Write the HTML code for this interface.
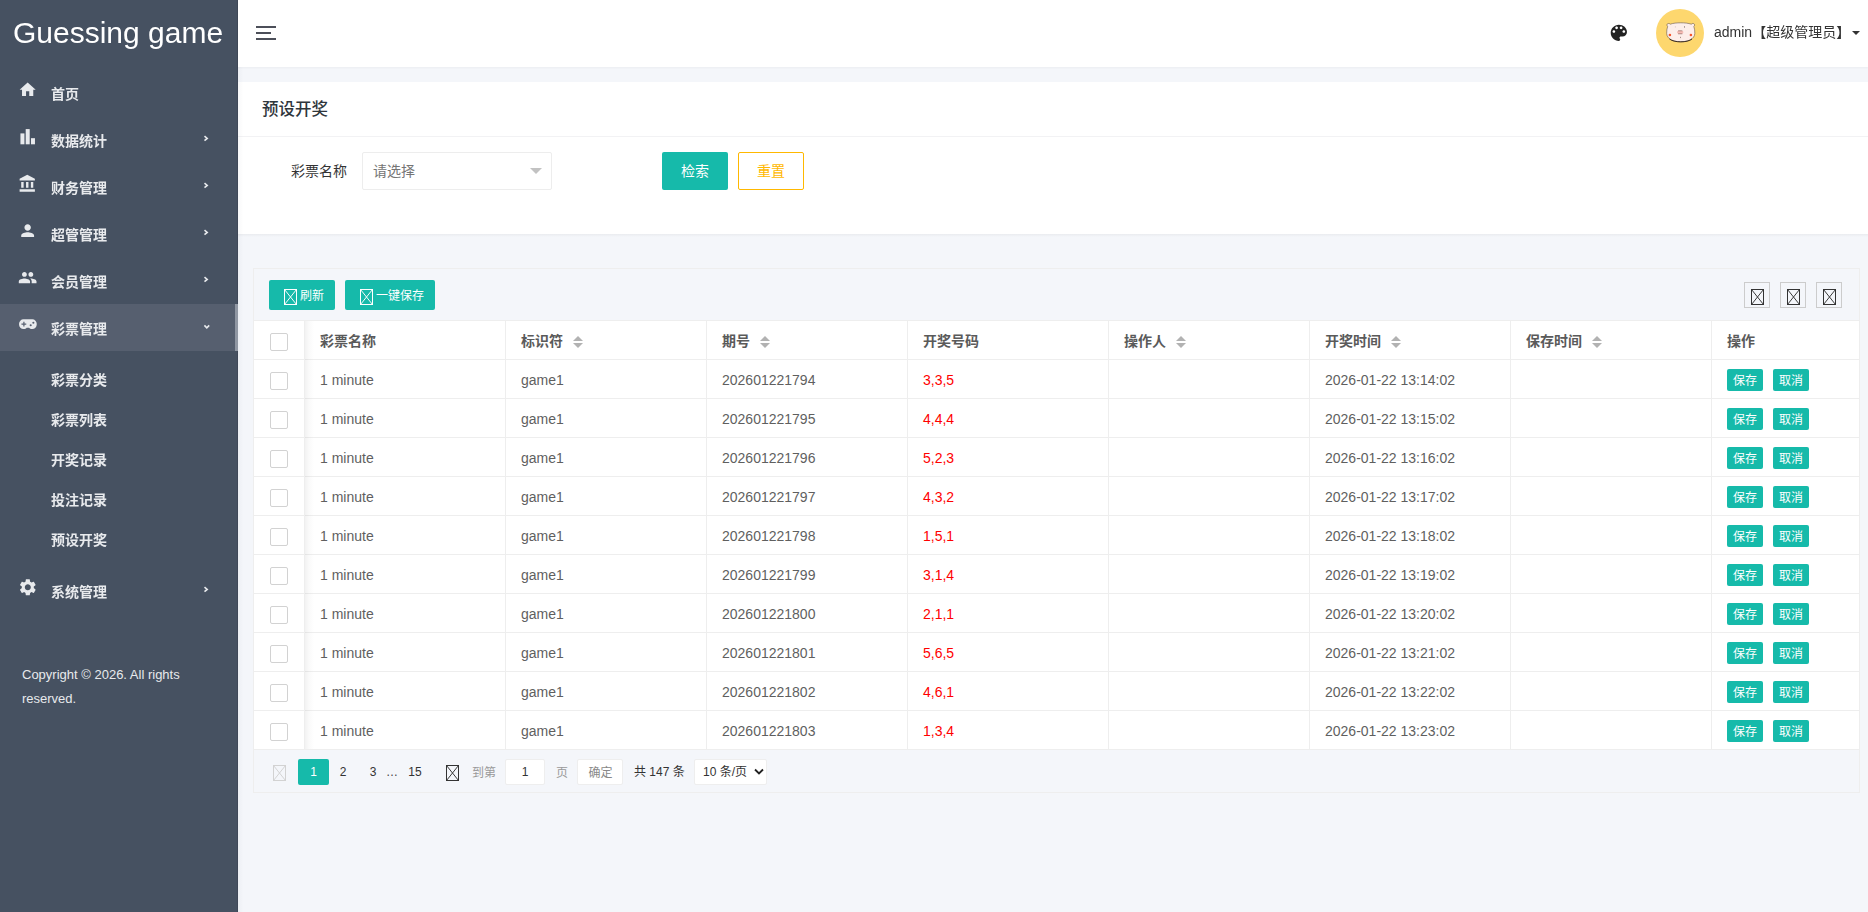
<!DOCTYPE html>
<html lang="zh-CN">
<head>
<meta charset="utf-8">
<title>Guessing game</title>
<style>
*{box-sizing:border-box;margin:0;padding:0}
html,body{width:1868px;height:912px;overflow:hidden}
body{background:#f4f6fa;font-family:"Liberation Sans","Noto Sans CJK SC",sans-serif;font-size:14px;color:#333;position:relative}
.abs{position:absolute}
svg{display:block;overflow:visible}
/* ---------- sidebar ---------- */
#side{position:absolute;left:0;top:0;width:238px;height:912px;background:#465161;color:#e8eaed;}
#logo{position:absolute;left:13px;top:15px;font-size:30px;line-height:36px;color:#fff;white-space:nowrap}
.mi{position:absolute;left:0;width:238px;height:47px}
.mi.on{background:#565f6f}
.mi .t{position:absolute;left:51px;top:15px;font-size:14px;line-height:20px;font-weight:700;white-space:nowrap}
.mi svg.ic{position:absolute;left:18.3px;top:10.6px;width:19.3px;height:19.3px;fill:#e8eaed}
.mi svg.ar{position:absolute;left:202px;top:18px;width:8px;height:9px;fill:none;stroke:#e8eaed;stroke-width:1.6}
.si{position:absolute;left:51px;font-size:14px;line-height:20px;font-weight:700;white-space:nowrap}
#thumb{position:absolute;left:235px;top:304px;width:3px;height:47px;background:#9097a3}
#edge{position:absolute;left:236.800px;top:0;width:1.200px;height:912px;background:#3f4858}
#sshadow{position:absolute;left:238px;top:67px;width:5px;height:845px;background:linear-gradient(90deg,rgba(20,30,60,.035),rgba(20,30,60,0));pointer-events:none}
#menu{position:absolute;left:0;top:0;width:238px;height:640px;will-change:transform}
#copy{position:absolute;left:22px;top:663px;width:200px;font-size:13px;line-height:24px;color:#e8eaed}
/* ---------- header ---------- */
#head{will-change:transform;position:absolute;left:238px;top:0;width:1630px;height:67px;background:#fff;box-shadow:0 1px 2px rgba(0,0,0,.04)}
#burger{position:absolute;left:18px;top:26px;width:20px;height:15px}
#burger i{position:absolute;left:0;height:2px;background:#4c4f59;width:20px}
#pal{position:absolute;left:1369.5px;top:22.2px;width:21.7px;height:21.7px;fill:#222}
#ava{position:absolute;left:1418px;top:9px;width:48px;height:48px}
#uname{position:absolute;left:1476px;top:21px;font-size:14px;line-height:22px;color:#333;white-space:nowrap}
#caret{position:absolute;left:1614px;top:31px;width:0;height:0;border:4px solid transparent;border-top-color:#333;border-bottom:0}
/* ---------- card 1 ---------- */
#card1{position:absolute;left:238px;top:82px;width:1630px;height:152px;background:#fff}
#card1 .sh{position:absolute;left:0;top:152px;width:1630px;height:3px;background:linear-gradient(180deg,rgba(0,0,0,.045),rgba(0,0,0,0))}
#card1 h2{position:absolute;left:24px;top:15px;font-size:16.5px;line-height:24px;font-weight:500;color:#2f363c}
#card1 .hr{position:absolute;left:0;top:54px;width:1630px;height:1px;background:#f2f2f4}
#lbl{position:absolute;left:53px;top:78px;font-size:14px;line-height:22px;color:#333}
#sel{position:absolute;left:124px;top:70px;width:190px;height:38px;border:1px solid #ededed;border-radius:2px;background:#fff}
#sel span{position:absolute;left:10px;top:8px;line-height:20px;color:#757575}
#sel i{position:absolute;left:167px;top:15px;width:0;height:0;border:6px solid transparent;border-top-color:#c2c2c2;border-bottom:0}
.btn{position:absolute;height:38px;line-height:38px;border-radius:2px;text-align:center;font-size:14px;white-space:nowrap}
#b1{left:424px;top:70px;width:66px;background:#16baaa;color:#fff}
#b2{left:500px;top:70px;width:66px;border:1px solid #ffb800;color:#ffb800;line-height:36px;background:#fff}
/* ---------- table card ---------- */
#tb{position:absolute;left:253px;top:268px;width:1607px;height:525px;border:1px solid #eee}
.sb{position:absolute;top:11px;height:30px;border-radius:2px;background:#16baaa;color:#fff;font-size:12px;line-height:30px;white-space:nowrap}
.sb span{position:absolute;top:1px}
.tofu{position:absolute;fill:none}
.tool{position:absolute;top:13px;width:26px;height:26px;border:1px solid #ccc}
#grid{position:absolute;left:0;top:51px;width:1605px;height:430px;background:#fff;border-top:1px solid #eee}
.row{position:absolute;left:0;width:1605px;height:39px;border-bottom:1px solid #eee}
.c{position:absolute;top:0;height:38px;line-height:40px;padding-left:15px;border-right:1px solid #eee;color:#5f5f5f;white-space:nowrap;font-size:14px}
.c0{left:0;width:51px}
.c1{left:51px;width:201px}.c2{left:252px;width:201px}.c3{left:453px;width:201px}.c4{left:654px;width:201px}
.c5{left:855px;width:201px}.c6{left:1056px;width:201px}.c7{left:1257px;width:201px}.c8{left:1458px;width:147px;border-right:0}
.hd .c{font-weight:700;color:#5a5a5a}
.red{color:#f00}
.cb{position:absolute;left:16px;top:12px;width:18px;height:18px;border:1px solid #d2d2d2;border-radius:2px;background:#fff}
.srt{display:inline-block;position:relative;width:10px;height:12px;margin-left:10px;vertical-align:-2px}
.srt:before,.srt:after{content:"";position:absolute;left:0;border:5px solid transparent}
.srt:before{top:-5px;border-bottom-color:#b2b2b2}
.srt:after{top:7px;border-top-color:#b2b2b2}
.xb{position:absolute;top:9px;width:36px;height:22px;line-height:24px;background:#16baaa;color:#fff;font-size:12px;text-align:center;border-radius:2px}
#shadow{position:absolute;left:51px;top:52px;width:9px;height:428px;background:linear-gradient(90deg,rgba(0,0,0,.05),rgba(0,0,0,.02) 45%,rgba(0,0,0,0))}
/* pagination */
#pg{position:absolute;left:0;top:481px;width:1605px;height:42px;font-size:12px;color:#333}
#pg .p{position:absolute;top:9px;height:26px;line-height:26px;white-space:nowrap}
</style>
</head>
<body>
<div id="side"><div id="edge"></div><div id="copy">Copyright © 2026. All rights reserved.</div><div id="menu">
<div id="logo">Guessing game</div>
<div class="mi" style="top:69px">
<svg class="ic" viewBox="0 0 24 24"><path d="M10 20v-6h4v6h5v-8h3L12 3 2 12h3v8z"/></svg>
<span class="t">首页</span>
</div>
<div class="mi" style="top:116px">
<svg class="ic" viewBox="0 0 24 24"><rect x="3.030" y="7.960" width="4.970" height="13.560"/><rect x="9.580" y="2.600" width="4.970" height="18.920"/><rect x="16.130" y="13.900" width="4.970" height="7.620"/></svg>
<span class="t">数据统计</span>
<svg class="ar" viewBox="0 0 8 9"><path d="M2.500 2.200L5.200 4.400L2.500 6.600"/></svg>
</div>
<div class="mi" style="top:163px">
<svg class="ic" viewBox="0 0 24 24"><path d="M4 10v7h3v-7H4zm6 0v7h3v-7h-3zM2 22h19v-3H2v3zm14-12v7h3v-7h-3zm-4.500-9L2 6v2h19V6l-9.500-5z"/></svg>
<span class="t">财务管理</span>
<svg class="ar" viewBox="0 0 8 9"><path d="M2.500 2.200L5.200 4.400L2.500 6.600"/></svg>
</div>
<div class="mi" style="top:210px">
<svg class="ic" viewBox="0 0 24 24"><path d="M12 12c2.210 0 4-1.790 4-4s-1.790-4-4-4-4 1.790-4 4 1.790 4 4 4zm0 2c-2.670 0-8 1.340-8 4v2h16v-2c0-2.660-5.330-4-8-4z"/></svg>
<span class="t">超管管理</span>
<svg class="ar" viewBox="0 0 8 9"><path d="M2.500 2.200L5.200 4.400L2.500 6.600"/></svg>
</div>
<div class="mi" style="top:257px">
<svg class="ic" viewBox="0 0 24 24"><path d="M16 11c1.660 0 2.990-1.340 2.990-3S17.660 5 16 5c-1.660 0-3 1.340-3 3s1.340 3 3 3zm-8 0c1.660 0 2.990-1.340 2.990-3S9.660 5 8 5C6.340 5 5 6.340 5 8s1.340 3 3 3zm0 2c-2.330 0-7 1.170-7 3.500V19h14v-2.500c0-2.330-4.670-3.500-7-3.500zm8 0c-.290 0-.620.020-.970.050 1.160.840 1.970 1.970 1.970 3.450V19h6v-2.500c0-2.330-4.670-3.500-7-3.500z"/></svg>
<span class="t">会员管理</span>
<svg class="ar" viewBox="0 0 8 9"><path d="M2.500 2.200L5.200 4.400L2.500 6.600"/></svg>
</div>
<div class="mi on" style="top:304px">
<svg class="ic" viewBox="0 0 24 24"><path transform="translate(0.300,-0.600)" fill-rule="evenodd" d="M6.500 6h11A5.500 5.500 0 0 1 23 11.500v1A5.500 5.500 0 0 1 17.500 18h-1.400c-.800 0-1.500-.300-2-.800l-.300-.300c-.200-.200-.500-.300-.800-.300h-2c-.300 0-.600.100-.800.300l-.300.300c-.500.500-1.200.800-2 .800H6.500A5.500 5.500 0 0 1 1 12.500v-1A5.500 5.500 0 0 1 6.500 6zM6.300 9v2.200H4v1.500h2.300V15h1.500v-2.300H10v-1.500H7.800V9zM15.500 12a1.300 1.300 0 1 0 0 2.600 1.300 1.300 0 0 0 0-2.600zM18.800 9a1.300 1.300 0 1 0 0 2.600 1.300 1.300 0 0 0 0-2.600z"/></svg>
<span class="t">彩票管理</span>
<svg class="ar" viewBox="0 0 8 9"><path d="M2.400 3.400L4.800 5.800L7.200 3.400"/></svg>
</div>
<div class="mi" style="top:567px">
<svg class="ic" viewBox="0 0 24 24"><path transform="translate(12.200 11.600) scale(1.040) translate(-12 -12)" d="M19.140 12.940c.040-.300.060-.610.060-.940 0-.320-.020-.640-.070-.940l2.030-1.580c.180-.140.230-.410.120-.610l-1.920-3.320c-.120-.220-.370-.290-.590-.220l-2.390.960c-.500-.380-1.030-.700-1.620-.940l-.360-2.540c-.040-.240-.240-.410-.480-.410h-3.840c-.240 0-.430.170-.470.410l-.360 2.540c-.590.240-1.130.570-1.620.940l-2.390-.960c-.220-.080-.470 0-.590.220L2.740 8.870c-.120.210-.080.470.120.610l2.030 1.580c-.050.300-.090.630-.090.940s.020.640.070.940l-2.030 1.580c-.180.140-.230.410-.120.610l1.920 3.320c.120.220.370.290.590.220l2.390-.960c.500.380 1.030.700 1.620.940l.360 2.540c.050.240.240.410.480.410h3.840c.240 0 .440-.170.470-.410l.360-2.540c.590-.240 1.130-.560 1.620-.940l2.390.960c.220.080.470 0 .590-.220l1.920-3.320c.120-.220.070-.470-.120-.610l-2.010-1.580zM12 15.600c-1.980 0-3.600-1.620-3.600-3.600s1.620-3.600 3.600-3.600 3.600 1.620 3.600 3.600-1.620 3.600-3.600 3.600z"/></svg>
<span class="t">系统管理</span>
<svg class="ar" viewBox="0 0 8 9"><path d="M2.500 2.200L5.200 4.400L2.500 6.600"/></svg>
</div>
<div class="si" style="top:370px">彩票分类</div>
<div class="si" style="top:410px">彩票列表</div>
<div class="si" style="top:450px">开奖记录</div>
<div class="si" style="top:490px">投注记录</div>
<div class="si" style="top:530px">预设开奖</div>
<div id="thumb"></div></div>
</div>
<div id="head">
<div id="burger"><i style="top:0"></i><i style="top:6px;width:15px"></i><i style="top:12px"></i></div>
<svg id="pal" viewBox="0 0 24 24"><path d="M12 3c-4.970 0-9 4.030-9 9s4.030 9 9 9c.830 0 1.500-.670 1.500-1.500 0-.390-.150-.740-.390-1.010-.230-.260-.380-.610-.380-.990 0-.830.670-1.500 1.500-1.500H16c2.760 0 5-2.240 5-5 0-4.420-4.030-8-9-8zm-5.500 9c-.830 0-1.500-.670-1.500-1.500S5.670 9 6.500 9 8 9.670 8 10.500 7.330 12 6.500 12zm3-4C8.670 8 8 7.330 8 6.500S8.670 5 9.500 5s1.500.670 1.500 1.500S10.330 8 9.500 8zm5 0c-.830 0-1.500-.670-1.500-1.500S13.670 5 14.500 5s1.500.670 1.500 1.500S15.330 8 14.500 8zm3 4c-.830 0-1.500-.670-1.500-1.500S16.670 9 17.500 9s1.500.670 1.500 1.500-.670 1.500-1.500 1.500z"/></svg>
<svg id="ava" viewBox="0 0 48 48"><circle cx="24" cy="24" r="24" fill="#fdd76e"/>
<path d="M14.200 15.200C17 14.200 21 13.800 24.750 13.800C28.500 13.800 32.500 14.200 35.300 15.200C36 14.300 37.600 14.200 38.300 15.100C38.900 15.900 38.500 16.900 37.800 17.300C38.600 19.500 38.900 22 38.800 24.500C38.600 30 32 32.800 24.750 32.800C17.500 32.800 10.900 30 10.700 24.500C10.600 22 10.900 19.500 11.700 17.300C11 16.900 10.600 15.900 11.200 15.100C11.900 14.200 13.500 14.300 14.200 15.200Z" fill="#fdeeea" stroke="#4a3a34" stroke-width=".5"/>
<path d="M13.500 30C16 32 20 32.800 24.750 32.800C29.500 32.800 33.500 32 36 30" fill="none" stroke="#2e211d" stroke-width=".9"/>
<ellipse cx="24.200" cy="23.300" rx="3.200" ry="1.750" fill="#f7bdb6"/><path d="M22 21.800h4.400M22 24.800h4.400" stroke="#6b4a45" stroke-width=".5" fill="none"/>
<circle cx="13.900" cy="26" r="1.300" fill="#f4552a"/><circle cx="34.900" cy="26" r="1.300" fill="#f4552a"/>
<path d="M19.400 17.300v1.200" stroke="#b9aaa6" stroke-width=".5"/><path d="M28.500 17.200v1.500" stroke="#4a3a34" stroke-width=".55"/>
<path d="M24 27.700c.5 0 .7.500.5 1.400" stroke="#5a4a45" stroke-width=".5" fill="none"/></svg>
<div id="uname">admin【超级管理员】</div><div id="caret"></div>
</div>
<div id="card1"><h2>预设开奖</h2><div class="hr"></div><div class="sh"></div>
<div id="lbl">彩票名称</div><div id="sel"><span>请选择</span><i></i></div>
<div class="btn" id="b1">检索</div><div class="btn" id="b2">重置</div>
</div>
<div id="tb">
<div class="sb" style="left:15px;width:66px"><span style="left:31px">刷新</span><svg class="tofu" style="left:14.5px;top:9px;width:13px;height:16px" viewBox="0 0 13 16"><rect x="0.5" y="0.5" width="12.0" height="15.0" stroke="#fff" stroke-width="1.0"/><path d="M0.5 0.5L12.5 15.5M12.5 0.5L0.5 15.5" stroke="#fff" stroke-width="0.95"/></svg></div>
<div class="sb" style="left:91px;width:90px"><span style="left:31px">一键保存</span><svg class="tofu" style="left:14.5px;top:9px;width:13px;height:16px" viewBox="0 0 13 16"><rect x="0.5" y="0.5" width="12.0" height="15.0" stroke="#fff" stroke-width="1.0"/><path d="M0.5 0.5L12.5 15.5M12.5 0.5L0.5 15.5" stroke="#fff" stroke-width="0.95"/></svg></div>
<div class="tool" style="left:1490px"><svg class="tofu" style="left:6px;top:6px;width:13px;height:16px" viewBox="0 0 13 16"><rect x="0.5" y="0.5" width="12.0" height="15.0" stroke="#333" stroke-width="1.0"/><path d="M0.5 0.5L12.5 15.5M12.5 0.5L0.5 15.5" stroke="#333" stroke-width="0.95"/></svg></div>
<div class="tool" style="left:1526px"><svg class="tofu" style="left:6px;top:6px;width:13px;height:16px" viewBox="0 0 13 16"><rect x="0.5" y="0.5" width="12.0" height="15.0" stroke="#333" stroke-width="1.0"/><path d="M0.5 0.5L12.5 15.5M12.5 0.5L0.5 15.5" stroke="#333" stroke-width="0.95"/></svg></div>
<div class="tool" style="left:1562px"><svg class="tofu" style="left:6px;top:6px;width:13px;height:16px" viewBox="0 0 13 16"><rect x="0.5" y="0.5" width="12.0" height="15.0" stroke="#333" stroke-width="1.0"/><path d="M0.5 0.5L12.5 15.5M12.5 0.5L0.5 15.5" stroke="#333" stroke-width="0.95"/></svg></div>
<div id="grid">
<div class="row hd" style="top:0"><div class="c c0"><div class="cb"></div></div>
<div class="c c1">彩票名称</div>
<div class="c c2">标识符<span class="srt"></span></div>
<div class="c c3">期号<span class="srt"></span></div>
<div class="c c4">开奖号码</div>
<div class="c c5">操作人<span class="srt"></span></div>
<div class="c c6">开奖时间<span class="srt"></span></div>
<div class="c c7">保存时间<span class="srt"></span></div>
<div class="c c8">操作</div>
</div>
<div class="row" style="top:39px"><div class="c c0"><div class="cb"></div></div>
<div class="c c1">1 minute</div><div class="c c2">game1</div><div class="c c3">202601221794</div>
<div class="c c4 red">3,3,5</div><div class="c c5"></div><div class="c c6">2026-01-22 13:14:02</div><div class="c c7"></div>
<div class="c c8"><div class="xb" style="left:15px">保存</div><div class="xb" style="left:61px">取消</div></div></div>
<div class="row" style="top:78px"><div class="c c0"><div class="cb"></div></div>
<div class="c c1">1 minute</div><div class="c c2">game1</div><div class="c c3">202601221795</div>
<div class="c c4 red">4,4,4</div><div class="c c5"></div><div class="c c6">2026-01-22 13:15:02</div><div class="c c7"></div>
<div class="c c8"><div class="xb" style="left:15px">保存</div><div class="xb" style="left:61px">取消</div></div></div>
<div class="row" style="top:117px"><div class="c c0"><div class="cb"></div></div>
<div class="c c1">1 minute</div><div class="c c2">game1</div><div class="c c3">202601221796</div>
<div class="c c4 red">5,2,3</div><div class="c c5"></div><div class="c c6">2026-01-22 13:16:02</div><div class="c c7"></div>
<div class="c c8"><div class="xb" style="left:15px">保存</div><div class="xb" style="left:61px">取消</div></div></div>
<div class="row" style="top:156px"><div class="c c0"><div class="cb"></div></div>
<div class="c c1">1 minute</div><div class="c c2">game1</div><div class="c c3">202601221797</div>
<div class="c c4 red">4,3,2</div><div class="c c5"></div><div class="c c6">2026-01-22 13:17:02</div><div class="c c7"></div>
<div class="c c8"><div class="xb" style="left:15px">保存</div><div class="xb" style="left:61px">取消</div></div></div>
<div class="row" style="top:195px"><div class="c c0"><div class="cb"></div></div>
<div class="c c1">1 minute</div><div class="c c2">game1</div><div class="c c3">202601221798</div>
<div class="c c4 red">1,5,1</div><div class="c c5"></div><div class="c c6">2026-01-22 13:18:02</div><div class="c c7"></div>
<div class="c c8"><div class="xb" style="left:15px">保存</div><div class="xb" style="left:61px">取消</div></div></div>
<div class="row" style="top:234px"><div class="c c0"><div class="cb"></div></div>
<div class="c c1">1 minute</div><div class="c c2">game1</div><div class="c c3">202601221799</div>
<div class="c c4 red">3,1,4</div><div class="c c5"></div><div class="c c6">2026-01-22 13:19:02</div><div class="c c7"></div>
<div class="c c8"><div class="xb" style="left:15px">保存</div><div class="xb" style="left:61px">取消</div></div></div>
<div class="row" style="top:273px"><div class="c c0"><div class="cb"></div></div>
<div class="c c1">1 minute</div><div class="c c2">game1</div><div class="c c3">202601221800</div>
<div class="c c4 red">2,1,1</div><div class="c c5"></div><div class="c c6">2026-01-22 13:20:02</div><div class="c c7"></div>
<div class="c c8"><div class="xb" style="left:15px">保存</div><div class="xb" style="left:61px">取消</div></div></div>
<div class="row" style="top:312px"><div class="c c0"><div class="cb"></div></div>
<div class="c c1">1 minute</div><div class="c c2">game1</div><div class="c c3">202601221801</div>
<div class="c c4 red">5,6,5</div><div class="c c5"></div><div class="c c6">2026-01-22 13:21:02</div><div class="c c7"></div>
<div class="c c8"><div class="xb" style="left:15px">保存</div><div class="xb" style="left:61px">取消</div></div></div>
<div class="row" style="top:351px"><div class="c c0"><div class="cb"></div></div>
<div class="c c1">1 minute</div><div class="c c2">game1</div><div class="c c3">202601221802</div>
<div class="c c4 red">4,6,1</div><div class="c c5"></div><div class="c c6">2026-01-22 13:22:02</div><div class="c c7"></div>
<div class="c c8"><div class="xb" style="left:15px">保存</div><div class="xb" style="left:61px">取消</div></div></div>
<div class="row" style="top:390px"><div class="c c0"><div class="cb"></div></div>
<div class="c c1">1 minute</div><div class="c c2">game1</div><div class="c c3">202601221803</div>
<div class="c c4 red">1,3,4</div><div class="c c5"></div><div class="c c6">2026-01-22 13:23:02</div><div class="c c7"></div>
<div class="c c8"><div class="xb" style="left:15px">保存</div><div class="xb" style="left:61px">取消</div></div></div>
</div>
<div id="shadow"></div>
<div id="pg">
<svg class="tofu" style="left:18.5px;top:15px;width:13px;height:16px" viewBox="0 0 13 16"><rect x="0.5" y="0.5" width="12.0" height="15.0" stroke="#d2d2d2" stroke-width="1.0"/><path d="M0.5 0.5L12.5 15.5M12.5 0.5L0.5 15.5" stroke="#d2d2d2" stroke-width="0.95"/></svg>
<div class="p" style="left:44px;width:31px;background:#16baaa;color:#fff;text-align:center;border-radius:2px">1</div>
<div class="p" style="left:75px;width:28px;text-align:center">2</div>
<div class="p" style="left:105px;width:28px;text-align:center">3</div>
<div class="p" style="left:132px;width:12px;text-align:center;color:#444">…</div>
<div class="p" style="left:146px;width:30px;text-align:center">15</div>
<svg class="tofu" style="left:192px;top:15px;width:13px;height:16px" viewBox="0 0 13 16"><rect x="0.5" y="0.5" width="12.0" height="15.0" stroke="#333" stroke-width="1.0"/><path d="M0.5 0.5L12.5 15.5M12.5 0.5L0.5 15.5" stroke="#333" stroke-width="0.95"/></svg>
<div class="p" style="left:218px;color:#999;line-height:28px">到第</div>
<div class="p" style="left:251px;width:40px;border:1px solid #eee;border-radius:2px;background:#fff;text-align:center;line-height:24px">1</div>
<div class="p" style="left:302px;color:#999;line-height:28px">页</div>
<div class="p" style="left:323px;width:46px;border:1px solid #eee;border-radius:2px;background:#fff;text-align:center;line-height:26px;color:#888;padding-left:1px">确定</div>
<div class="p" style="left:380px">共 147 条</div>
<div class="p" style="left:440px;width:73px;border:1px solid #eee;border-radius:2px;background:#fff;line-height:24px;padding-left:8px">10 条/页<svg class="abs" style="left:58.500px;top:8px;width:10px;height:8px" viewBox="0 0 10 8"><path d="M1 1.500L5 5.500L9 1.500" fill="none" stroke="#222" stroke-width="1.800"/></svg></div>
</div>
</div>
<div id="sshadow"></div>
</body>
</html>
